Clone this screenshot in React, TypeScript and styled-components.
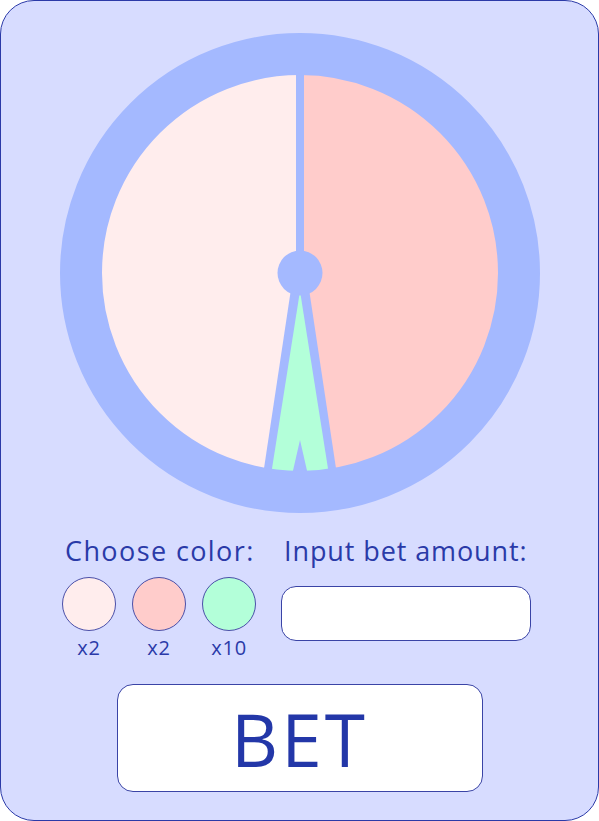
import React from "react";
import styled, { createGlobalStyle } from "styled-components";

const Global = createGlobalStyle`
  html, body { margin: 0; padding: 0; background: #ffffff; }
  body { font-family: "Open Sans", "Lato", sans-serif; }
  * { box-sizing: border-box; }
`;

const Card = styled.div`
  width: 599px;
  height: 821px;
  background: #d7dcff;
  border: 1.5px solid #2b3aa8;
  border-radius: 34px;
  display: flex;
  flex-direction: column;
  align-items: center;
  padding-top: 32px;
`;

const WheelSvg = styled.svg`
  display: block;
  width: 480px;
  height: 480px;
  flex: none;
`;

const Controls = styled.div`
  align-self: stretch;
  display: grid;
  grid-template-columns: 194px 250px;
  column-gap: 25px;
  padding-left: 61px;
  margin-top: 22px;
`;

const Column = styled.div`
  display: flex;
  flex-direction: column;
`;

const Label = styled.div<{ $indent?: number; $spacing?: number }>`
  color: #2a3aa8;
  font-size: 27px;
  font-weight: 400;
  letter-spacing: ${(p) => p.$spacing ?? 0.9}px;
  line-height: 32px;
  white-space: nowrap;
  padding-left: ${(p) => p.$indent ?? 0}px;
`;

const Swatches = styled.div`
  display: flex;
  gap: 16px;
  margin-top: 10px;
`;

const Swatch = styled.div`
  display: flex;
  flex-direction: column;
  align-items: center;
  width: 54px;
`;

const Dot = styled.div<{ $color: string }>`
  width: 54px;
  height: 54px;
  border-radius: 50%;
  background: ${(p) => p.$color};
  border: 1px solid #4a4fa8;
`;

const Mult = styled.div`
  color: #2a3aa8;
  font-size: 20px;
  font-weight: 400;
  letter-spacing: 0.8px;
  line-height: 22px;
  margin-top: 6px;
`;

const AmountInput = styled.input`
  width: 250px;
  height: 55px;
  margin-top: 19px;
  background: #ffffff;
  border: 1px solid #3a44a6;
  border-radius: 15px;
  outline: none;
  font-family: inherit;
  font-size: 22px;
  color: #2a3aa8;
  padding: 0 14px;
`;

const BetButton = styled.button`
  width: 366px;
  height: 108px;
  margin-top: 25px;
  background: #ffffff;
  border: 1px solid #3a44a6;
  border-radius: 16px;
  font-family: inherit;
  font-size: 73px;
  font-weight: 400;
  letter-spacing: 3px;
  text-indent: 0px;
  color: #2337a8;
  cursor: pointer;
  padding: 0;
`;

const RING = "#a4b9ff";

function Wheel() {
  const cx = 240;
  const cy = 240;
  const r = 200;
  return (
    <WheelSvg viewBox="0 0 480 480">
      <path d={`M ${cx} ${cy - r} A ${r} ${r} 0 0 0 ${cx} ${cy + r} Z`} fill="#ffeded" />
      <path d={`M ${cx} ${cy - r} A ${r} ${r} 0 0 1 ${cx} ${cy + r} Z`} fill="#ffcccb" />
      <rect x={236} y={30} width={8} height={210} fill={RING} />
      <polygon points="231,256 249,256 277,442 203,442" fill={RING} />
      <polygon points="240,258 269,442 211,442" fill="#b3ffd9" />
      <polygon points="240,407 232,442 248,442" fill={RING} />
      <circle cx={cx} cy={cy} r={22.5} fill={RING} />
      <circle cx={cx} cy={cy} r={219} fill="none" stroke={RING} strokeWidth={42} />
    </WheelSvg>
  );
}

export default function App() {
  return (
    <>
      <Global />
      <Card>
        <Wheel />
        <Controls>
          <Column>
            <Label $indent={3} $spacing={1.4}>Choose color:</Label>
            <Swatches>
              <Swatch>
                <Dot $color="#ffeded" />
                <Mult>x2</Mult>
              </Swatch>
              <Swatch>
                <Dot $color="#ffcccb" />
                <Mult>x2</Mult>
              </Swatch>
              <Swatch>
                <Dot $color="#b3ffd9" />
                <Mult>x10</Mult>
              </Swatch>
            </Swatches>
          </Column>
          <Column>
            <Label $indent={3}>Input bet amount:</Label>
            <AmountInput type="text" aria-label="Input bet amount" />
          </Column>
        </Controls>
        <BetButton>BET</BetButton>
      </Card>
    </>
  );
}
